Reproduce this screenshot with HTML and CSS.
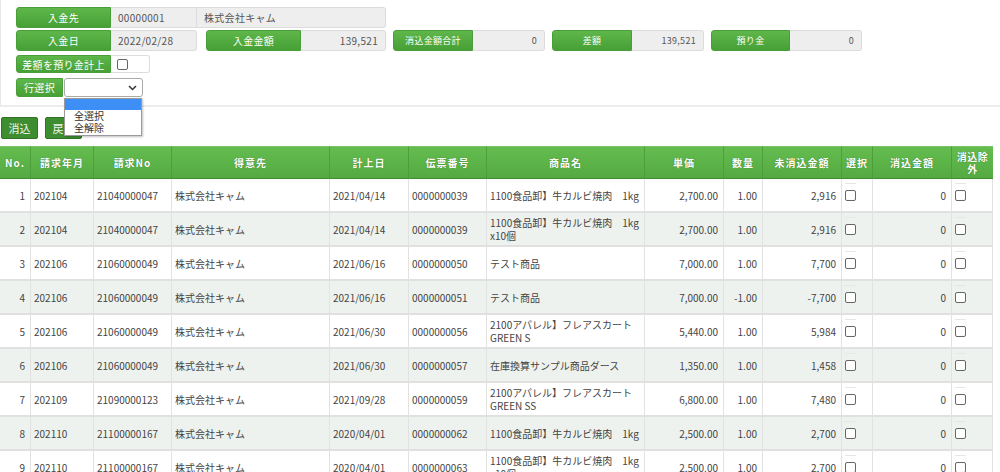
FILE: index.html
```html
<!DOCTYPE html>
<html lang="ja">
<head>
<meta charset="utf-8">
<link rel="stylesheet" href="styles.css">
</head>
<body>
<div class="panel">
  <div class="row r1">
    <div class="field">
      <div class="lbl w94">入金先</div>
      <div class="val w86">00000001</div>
      <div class="val w189">株式会社キャム</div>
    </div>
  </div>
  <div class="row r2">
    <div class="field">
      <div class="lbl w94">入金日</div>
      <div class="val w86">2022/02/28</div>
    </div>
    <div class="field g2">
      <div class="lbl w95">入金金額</div>
      <div class="val num w85">139,521</div>
    </div>
    <div class="field small">
      <div class="lbl w80">消込金額合計</div>
      <div class="val num w72">0</div>
    </div>
    <div class="field small">
      <div class="lbl w80">差額</div>
      <div class="val num w72">139,521</div>
    </div>
    <div class="field small">
      <div class="lbl w79">預り金</div>
      <div class="val num w72">0</div>
    </div>
  </div>
  <div class="row r3">
    <div class="field">
      <div class="lbl w94">差額を預り金計上</div>
      <div class="chkbox"><span class="cb"></span></div>
    </div>
  </div>
  <div class="row r4">
    <div class="field">
      <div class="lbl w46">行選択</div>
      <div class="select">
        <svg class="chev" width="9" height="6" viewBox="0 0 9 6"><path d="M1 1 L4.5 4.5 L8 1" fill="none" stroke="#333" stroke-width="1.5"/></svg>
      </div>
    </div>
    <div class="dropdown">
      <div class="opt sel"></div>
      <div class="opt">全選択</div>
      <div class="opt">全解除</div>
    </div>
  </div>
</div>

<div class="buttons">
  <button class="btn">消込</button>
  <button class="btn">戻る</button>
</div>

<table class="grid">
  <colgroup>
    <col style="width:31px"><col style="width:63px"><col style="width:78px"><col style="width:158px">
    <col style="width:79px"><col style="width:78px"><col style="width:158px"><col style="width:79px">
    <col style="width:39px"><col style="width:79px"><col style="width:31px"><col style="width:79px"><col style="width:41px">
  </colgroup>
  <thead>
    <tr>
      <th>No.</th><th>請求年月</th><th>請求No</th><th>得意先</th><th>計上日</th><th>伝票番号</th><th>商品名</th><th>単価</th><th>数量</th><th>未消込金額</th><th>選択</th><th>消込金額</th><th class="wrap">消込除外</th>
    </tr>
  </thead>
  <tbody>
    <tr>
      <td class="r">1</td><td>202104</td><td>21040000047</td><td>株式会社キャム</td><td>2021/04/14</td><td>0000000039</td><td>1100食品卸】牛カルビ焼肉　1kg</td><td class="r">2,700.00</td><td class="r">1.00</td><td class="r">2,916</td><td class="c"><span class="dash"></span><span class="cb"></span></td><td class="r">0</td><td class="c"><span class="dash"></span><span class="cb"></span></td>
    </tr>
    <tr class="alt">
      <td class="r">2</td><td>202104</td><td>21040000047</td><td>株式会社キャム</td><td>2021/04/14</td><td>0000000039</td><td>1100食品卸】牛カルビ焼肉　1kg<br>x10個</td><td class="r">2,700.00</td><td class="r">1.00</td><td class="r">2,916</td><td class="c"><span class="dash"></span><span class="cb"></span></td><td class="r">0</td><td class="c"><span class="dash"></span><span class="cb"></span></td>
    </tr>
    <tr>
      <td class="r">3</td><td>202106</td><td>21060000049</td><td>株式会社キャム</td><td>2021/06/16</td><td>0000000050</td><td>テスト商品</td><td class="r">7,000.00</td><td class="r">1.00</td><td class="r">7,700</td><td class="c"><span class="dash"></span><span class="cb"></span></td><td class="r">0</td><td class="c"><span class="dash"></span><span class="cb"></span></td>
    </tr>
    <tr class="alt">
      <td class="r">4</td><td>202106</td><td>21060000049</td><td>株式会社キャム</td><td>2021/06/16</td><td>0000000051</td><td>テスト商品</td><td class="r">7,000.00</td><td class="r">-1.00</td><td class="r">-7,700</td><td class="c"><span class="dash"></span><span class="cb"></span></td><td class="r">0</td><td class="c"><span class="dash"></span><span class="cb"></span></td>
    </tr>
    <tr>
      <td class="r">5</td><td>202106</td><td>21060000049</td><td>株式会社キャム</td><td>2021/06/30</td><td>0000000056</td><td>2100アパレル】フレアスカート<br>GREEN S</td><td class="r">5,440.00</td><td class="r">1.00</td><td class="r">5,984</td><td class="c"><span class="dash"></span><span class="cb"></span></td><td class="r">0</td><td class="c"><span class="dash"></span><span class="cb"></span></td>
    </tr>
    <tr class="alt">
      <td class="r">6</td><td>202106</td><td>21060000049</td><td>株式会社キャム</td><td>2021/06/30</td><td>0000000057</td><td>在庫換算サンプル商品ダース</td><td class="r">1,350.00</td><td class="r">1.00</td><td class="r">1,458</td><td class="c"><span class="dash"></span><span class="cb"></span></td><td class="r">0</td><td class="c"><span class="dash"></span><span class="cb"></span></td>
    </tr>
    <tr>
      <td class="r">7</td><td>202109</td><td>21090000123</td><td>株式会社キャム</td><td>2021/09/28</td><td>0000000059</td><td>2100アパレル】フレアスカート<br>GREEN SS</td><td class="r">6,800.00</td><td class="r">1.00</td><td class="r">7,480</td><td class="c"><span class="dash"></span><span class="cb"></span></td><td class="r">0</td><td class="c"><span class="dash"></span><span class="cb"></span></td>
    </tr>
    <tr class="alt">
      <td class="r">8</td><td>202110</td><td>21100000167</td><td>株式会社キャム</td><td>2020/04/01</td><td>0000000062</td><td>1100食品卸】牛カルビ焼肉　1kg</td><td class="r">2,500.00</td><td class="r">1.00</td><td class="r">2,700</td><td class="c"><span class="dash"></span><span class="cb"></span></td><td class="r">0</td><td class="c"><span class="dash"></span><span class="cb"></span></td>
    </tr>
    <tr>
      <td class="r">9</td><td>202110</td><td>21100000167</td><td>株式会社キャム</td><td>2020/04/01</td><td>0000000063</td><td>1100食品卸】牛カルビ焼肉　1kg<br>x10個</td><td class="r">2,500.00</td><td class="r">1.00</td><td class="r">2,700</td><td class="c"><span class="dash"></span><span class="cb"></span></td><td class="r">0</td><td class="c"><span class="dash"></span><span class="cb"></span></td>
    </tr>
  </tbody>
</table>
</body>
</html>
```

FILE: styles.css
```css
* { box-sizing: border-box; }
html, body { margin: 0; padding: 0; }
body {
  font-family: "Noto Sans CJK JP", "Liberation Sans", sans-serif;
  font-size: 10px;
  color: #444;
  background: #fff;
  overflow: hidden;
}

/* ---------- top panel ---------- */
.panel {
  border-left: 1px solid #e6e6e6;
  border-bottom: 2px solid #ececec;
  padding: 7px 0 8px 15px;
}
.row { display: flex; gap: 7px; }
.r1 { height: 21px; margin-bottom: 2px; }
.r2 { height: 21px; margin-bottom: 4px; }
.r3 { height: 18px; margin-bottom: 5px; }
.r4 { height: 19px; position: relative; }
.r2 .g2 { margin-left: 2px; }

.field { display: flex; height: 100%; }
.field.small { font-size: 9px; }
.lbl {
  display: flex;
  align-items: center;
  justify-content: center;
  color: #fff;
  letter-spacing: 0.3px;
  background: linear-gradient(#5fb74b, #46a035);
  border: 1px solid #4a9e3a;
  border-radius: 3px 0 0 3px;
  white-space: nowrap;
}
.val {
  display: flex;
  align-items: center;
  padding: 0 7px;
  background: #eeeeee;
  border: 1px solid #dcdcdc;
  border-left: none;
  color: #555;
  letter-spacing: 0.3px;
  white-space: nowrap;
}
.field .val:last-child { border-radius: 0 3px 3px 0; }
.val.num { justify-content: flex-end; }
.w46 { width: 47px; }
.w79 { width: 79px; }
.w80 { width: 80px; }
.w94 { width: 95px; }
.w95 { width: 95px; }
.w72 { width: 72px; }
.w85 { width: 85px; }
.w86 { width: 86px; }
.w189 { width: 189px; }

.chkbox {
  width: 39px;
  display: flex;
  align-items: center;
  padding-left: 6px;
  border: 1px solid #dcdcdc;
  border-left: none;
  border-radius: 0 3px 3px 0;
  background: #fff;
}
.cb {
  display: inline-block;
  width: 11px;
  height: 11px;
  border: 1px solid #666;
  border-radius: 2px;
  background: #fff;
}
.select {
  width: 79px;
  position: relative;
  margin-left: 1px;
  border: 1px solid #aaa;
  border-radius: 3px;
  background: #fff;
}
.chev { position: absolute; right: 5px; top: 6px; }

.dropdown {
  position: absolute;
  left: 48px;
  top: 20px;
  width: 78px;
  background: #fff;
  border: 1px solid #9a9a9a;
  box-shadow: 1px 1px 2px rgba(0,0,0,0.25);
  z-index: 10;
  padding-bottom: 1px;
}
.opt { height: 12px; line-height: 12px; padding-left: 9px; color: #333; font-size: 10px; }
.opt.sel { background: #3d8ef5; height: 11px; }

/* ---------- buttons ---------- */
.buttons { display: flex; gap: 7px; margin-top: 10px; padding-left: 1px; }
.btn {
  width: 37px;
  height: 22px;
  padding: 0;
  font-family: inherit;
  font-size: 11px;
  color: #eef5ec;
  background: #3e8e31;
  border: 1px solid #2f7424;
  border-radius: 2px;
}

/* ---------- grid ---------- */
.grid {
  margin-top: 7px;
  width: 993px;
  table-layout: fixed;
  border-collapse: separate;
  border-spacing: 0;
}
.grid th {
  height: 33px;
  padding: 0 2px;
  color: #fff;
  font-weight: bold;
  font-size: 10px;
  letter-spacing: 1px;
  text-align: center;
  text-shadow: 0 0 1px #2f6e24;
  background: linear-gradient(#64bb4f, #55ab42);
  border-top: 1px solid #78c663;
  border-right: 1px solid #4f9e3e;
  border-bottom: 1px solid #3f8c31;
  line-height: 12px;
}
.grid th:last-child { border-right: none; }
.grid th.wrap { padding: 0 1px; letter-spacing: 0.5px; }
.grid tbody tr { height: 34px; }
.grid tbody tr.alt td { background: #eef2ee; }
.grid td {
  padding: 0 3px;
  color: #444;
  font-size: 10px;
  line-height: 13px;
  letter-spacing: 0;
  white-space: nowrap;
  overflow: hidden;
  border-right: 1px solid #e2e2e2;
  border-bottom: 2px solid #e0e0e0;
  background: #fff;
  vertical-align: middle;
}
.grid td.r { text-align: right; padding-right: 5px; }
.grid td.c { padding-left: 3px; position: relative; }
.grid td.c .cb { display: block; }
.dash {
  position: absolute;
  left: 3px;
  top: 4px;
  width: 11px;
  height: 1px;
  background: #e6e6e6;
}
```
